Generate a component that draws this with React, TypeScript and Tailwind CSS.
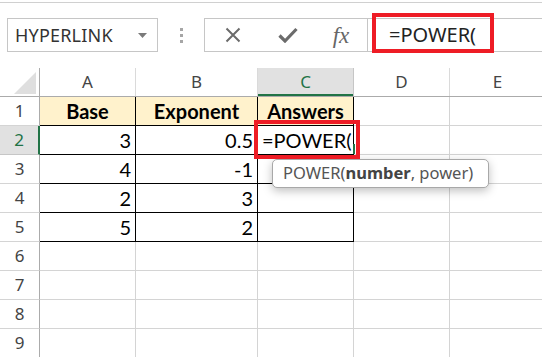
import React from "react";

const cols = [
  { key: "A", w: "w-[96px]" },
  { key: "B", w: "w-[122px]" },
  { key: "C", w: "w-[96px]" },
  { key: "D", w: "w-[96px]" },
  { key: "E", w: "w-[96px]" },
];

const data: (string | null)[][] = [
  ["Base", "Exponent", "Answers"],
  ["3", "0.5", "=POWER("],
  ["4", "-1", ""],
  ["2", "3", ""],
  ["5", "2", ""],
];

const head = "font-['Noto_Sans',sans-serif]";
const cell = "font-['Lato','Liberation_Sans',sans-serif]";

function Cell({ row, col }: { row: number; col: number }) {
  const c = cols[col];
  const inTable = row < 5 && col < 3;
  const value = inTable ? data[row][col] : null;
  const isHeader = row === 0 && inTable;
  const isC2 = row === 1 && col === 2;

  return (
    <div
      className={`${c.w} h-full shrink-0 border-r border-b flex items-center px-[4px] text-[20px] text-black ${cell} ${
        inTable ? "border-black" : "border-[#d4d4d4]"
      } ${isHeader ? "bg-[#fff2cc] justify-center font-bold" : isC2 ? "justify-start relative" : "justify-end"}`}
    >
      {value}
      {isC2 && (
        <>
          <span className="w-px h-[20px] bg-black ml-[3px]" />
          <span className="absolute right-[-2px] bottom-[0px] w-[2px] h-[10px] bg-[#217346]" />
        </>
      )}
    </div>
  );
}

export default function App() {
  return (
    <div className="w-[542px] h-[357px] overflow-hidden bg-white relative">
      {/* ribbon edge */}
      <div className="h-[2px]" />
      <div className="h-px bg-[#d0d0d0]" />

      {/* name box + formula bar */}
      <div className="mt-[15px] h-[34px] flex">
        <div className="ml-[7px] w-[151px] h-full border border-[#c6c6c6] flex items-center justify-between pl-[7px] pr-[10px]">
          <span className={`${head} text-[18px] text-[#333] tracking-[0.2px]`}>HYPERLINK</span>
          <svg width="9" height="5" viewBox="0 0 9 5">
            <path d="M0 0h9L4.5 5z" fill="#7a7a7a" />
          </svg>
        </div>
        <div className="w-[46px] h-full flex flex-col items-center justify-center gap-[3px]">
          <span className="w-[3px] h-[3px] bg-[#a6a6a6]" />
          <span className="w-[3px] h-[3px] bg-[#a6a6a6]" />
          <span className="w-[3px] h-[3px] bg-[#a6a6a6]" />
        </div>
        <div className="w-[164px] h-full border border-[#c6c6c6] flex items-center">
          <div className="w-[56px] flex justify-center">
            <svg width="16" height="16" viewBox="0 0 16 16">
              <path d="M1.5 1.5l13 13M14.5 1.5l-13 13" stroke="#6b6b6b" strokeWidth="2" />
            </svg>
          </div>
          <div className="w-[54px] flex justify-center">
            <svg width="20" height="16" viewBox="0 0 20 16">
              <path d="M1.5 8.5l5.5 5.5L18.5 2" stroke="#6b6b6b" strokeWidth="3.2" fill="none" />
            </svg>
          </div>
          <div className="w-[52px] flex justify-center">
            <span className="font-['Liberation_Serif',serif] italic text-[23px] text-[#666] leading-none">
              fx
            </span>
          </div>
        </div>
        <div className="flex-1 h-full border-y border-[#c6c6c6] flex items-center pl-[21px]">
          <span className={`${head} text-[20px] text-[#222]`}>=POWER(</span>
        </div>
      </div>

      {/* red annotation on formula bar */}
      <div className="absolute left-[372px] top-[13px] w-[122px] h-[40px] border-[4px] border-[#ee1c25]" />

      {/* column headers */}
      <div className="mt-[16px] h-[29px] flex border-b border-[#ababab]">
        <div className="w-[40px] h-full shrink-0 border-r border-[#ababab] flex items-end justify-end pr-[3px] pb-[2px]">
          <svg width="22" height="22" viewBox="0 0 22 22">
            <path d="M22 0V22H0z" fill="#dfdfdf" />
          </svg>
        </div>
        {cols.map((c) => (
          <div
            key={c.key}
            className={`${c.w} h-full shrink-0 border-r flex items-center justify-center text-[17px] ${head} ${
              c.key === "C"
                ? "bg-[#e1e1e1] text-[#217346] border-[#c6c6c6] shadow-[inset_0_-2px_0_#217346]"
                : "text-[#444] border-[#dadada]"
            }`}
          >
            {c.key}
          </div>
        ))}
      </div>

      {/* rows */}
      {Array.from({ length: 9 }).map((_, r) => (
        <div key={r} className="h-[29px] flex">
          <div
            className={`w-[40px] h-full shrink-0 border-b flex items-center justify-center text-[17px] ${head} ${
              r === 1
                ? "bg-[#e1e1e1] text-[#217346] border-[#c6c6c6] border-r-2 border-r-[#217346]"
                : "text-[#444] border-[#d4d4d4] border-r border-r-[#ababab]"
            }`}
          >
            {r + 1}
          </div>
          {cols.map((_, ci) => (
            <Cell key={ci} row={r} col={ci} />
          ))}
        </div>
      ))}

      {/* function tooltip */}
      <div className="absolute left-[272px] top-[159px] w-[217px] h-[29px] rounded-[5px] border border-[#a8a8a8] bg-white shadow-[0_3px_10px_rgba(0,0,0,0.25)] flex items-center pl-[10px]">
        <span className={`${head} text-[16.5px] text-[#555]`}>
          POWER(<b className="font-bold text-[#444]">number</b>, power)
        </span>
      </div>

      {/* red annotation on cell */}
      <div className="absolute left-[254px] top-[120px] w-[106px] h-[39px] border-[4px] border-[#ee1c25]" />
    </div>
  );
}
